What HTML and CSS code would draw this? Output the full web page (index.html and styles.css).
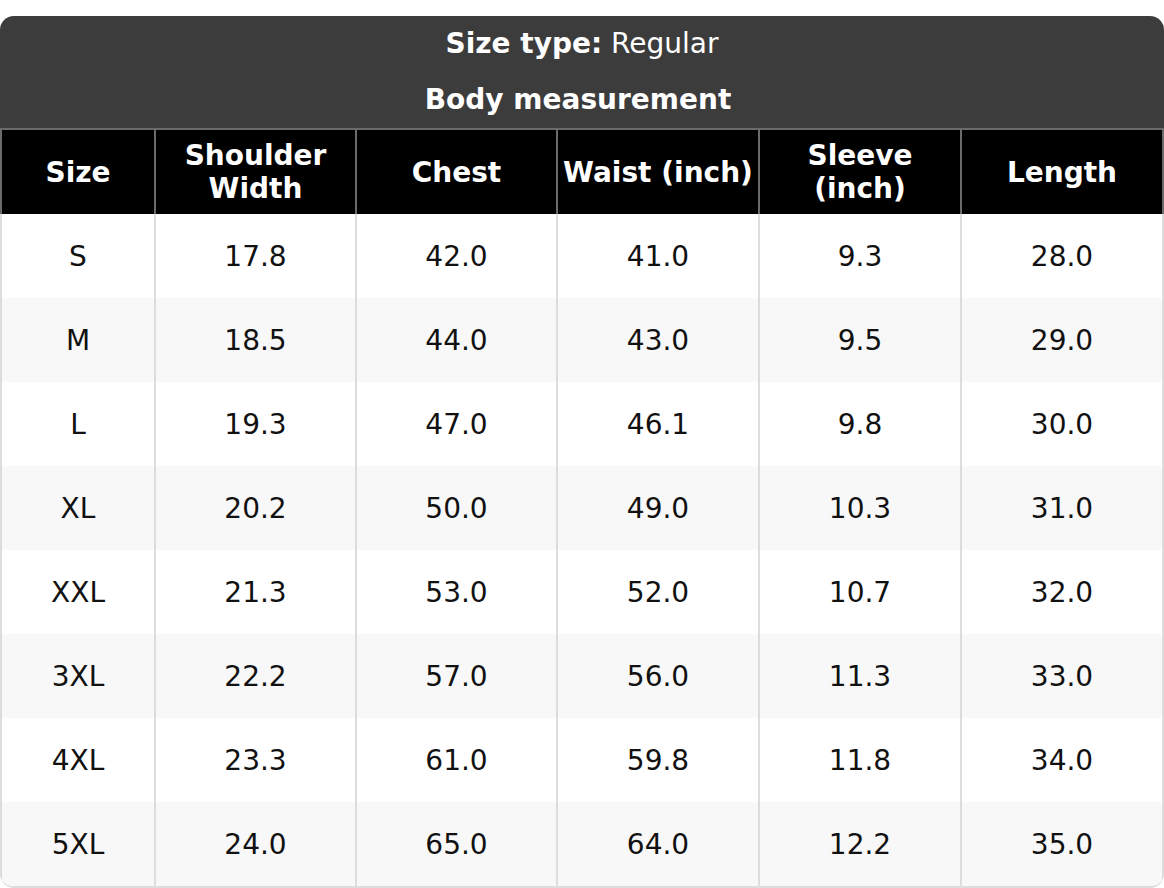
FILE: index.html
```html
<!DOCTYPE html>
<html>
<head>
<meta charset="utf-8">
<link rel="stylesheet" href="styles.css">
</head>
<body>
<div class="chart">
  <div class="title">
    <div class="title-line"><b>Size type:</b> Regular</div>
    <div class="title-line second"><b>Body measurement</b></div>
  </div>
  <div class="grid head">
    <div class="cell">Size</div>
    <div class="cell">Shoulder<br>Width</div>
    <div class="cell">Chest</div>
    <div class="cell">Waist (inch)</div>
    <div class="cell">Sleeve<br>(inch)</div>
    <div class="cell">Length</div>
  </div>
  <div class="grid row"><div class="cell">S</div><div class="cell">17.8</div><div class="cell">42.0</div><div class="cell">41.0</div><div class="cell">9.3</div><div class="cell">28.0</div></div>
  <div class="grid row alt"><div class="cell">M</div><div class="cell">18.5</div><div class="cell">44.0</div><div class="cell">43.0</div><div class="cell">9.5</div><div class="cell">29.0</div></div>
  <div class="grid row"><div class="cell">L</div><div class="cell">19.3</div><div class="cell">47.0</div><div class="cell">46.1</div><div class="cell">9.8</div><div class="cell">30.0</div></div>
  <div class="grid row alt"><div class="cell">XL</div><div class="cell">20.2</div><div class="cell">50.0</div><div class="cell">49.0</div><div class="cell">10.3</div><div class="cell">31.0</div></div>
  <div class="grid row"><div class="cell">XXL</div><div class="cell">21.3</div><div class="cell">53.0</div><div class="cell">52.0</div><div class="cell">10.7</div><div class="cell">32.0</div></div>
  <div class="grid row alt"><div class="cell">3XL</div><div class="cell">22.2</div><div class="cell">57.0</div><div class="cell">56.0</div><div class="cell">11.3</div><div class="cell">33.0</div></div>
  <div class="grid row"><div class="cell">4XL</div><div class="cell">23.3</div><div class="cell">61.0</div><div class="cell">59.8</div><div class="cell">11.8</div><div class="cell">34.0</div></div>
  <div class="grid row alt"><div class="cell">5XL</div><div class="cell">24.0</div><div class="cell">65.0</div><div class="cell">64.0</div><div class="cell">12.2</div><div class="cell">35.0</div></div>
</div>
</body>
</html>
```
FILE: styles.css
```css
html, body {
  margin: 0;
  padding: 0;
  background: #ffffff;
}
body {
  font-family: "DejaVu Sans", "Liberation Sans", sans-serif;
  font-size: 28px;
}
.chart {
  box-sizing: border-box;
  width: 1164px;
  margin-top: 16px;
  border-bottom: 2px solid #dddddd;
  border-radius: 14px;
  overflow: hidden;
}
.title {
  background: #3c3c3c;
  color: #ffffff;
  text-align: center;
  border-bottom: 2px solid #6a6a6a;
}
.title-line {
  height: 56px;
  line-height: 56px;
}
.title-line.second {
  padding-right: 8px;
}
.grid {
  display: grid;
  grid-template-columns: 154px 201px 201px 202px 202px 1fr;
}
.cell {
  display: flex;
  align-items: center;
  justify-content: center;
  text-align: center;
  line-height: 33px;
  border-left: 2px solid #dddddd;
}
.cell:last-child {
  border-right: 2px solid #dddddd;
}
.head {
  background: #000000;
  color: #ffffff;
  font-weight: bold;
  height: 84px;
}
.head .cell {
  border-color: #6a6a6a;
}
.row {
  height: 84px;
  background: #ffffff;
  color: #111111;
}
.row.alt {
  background: #f8f8f8;
}
```
